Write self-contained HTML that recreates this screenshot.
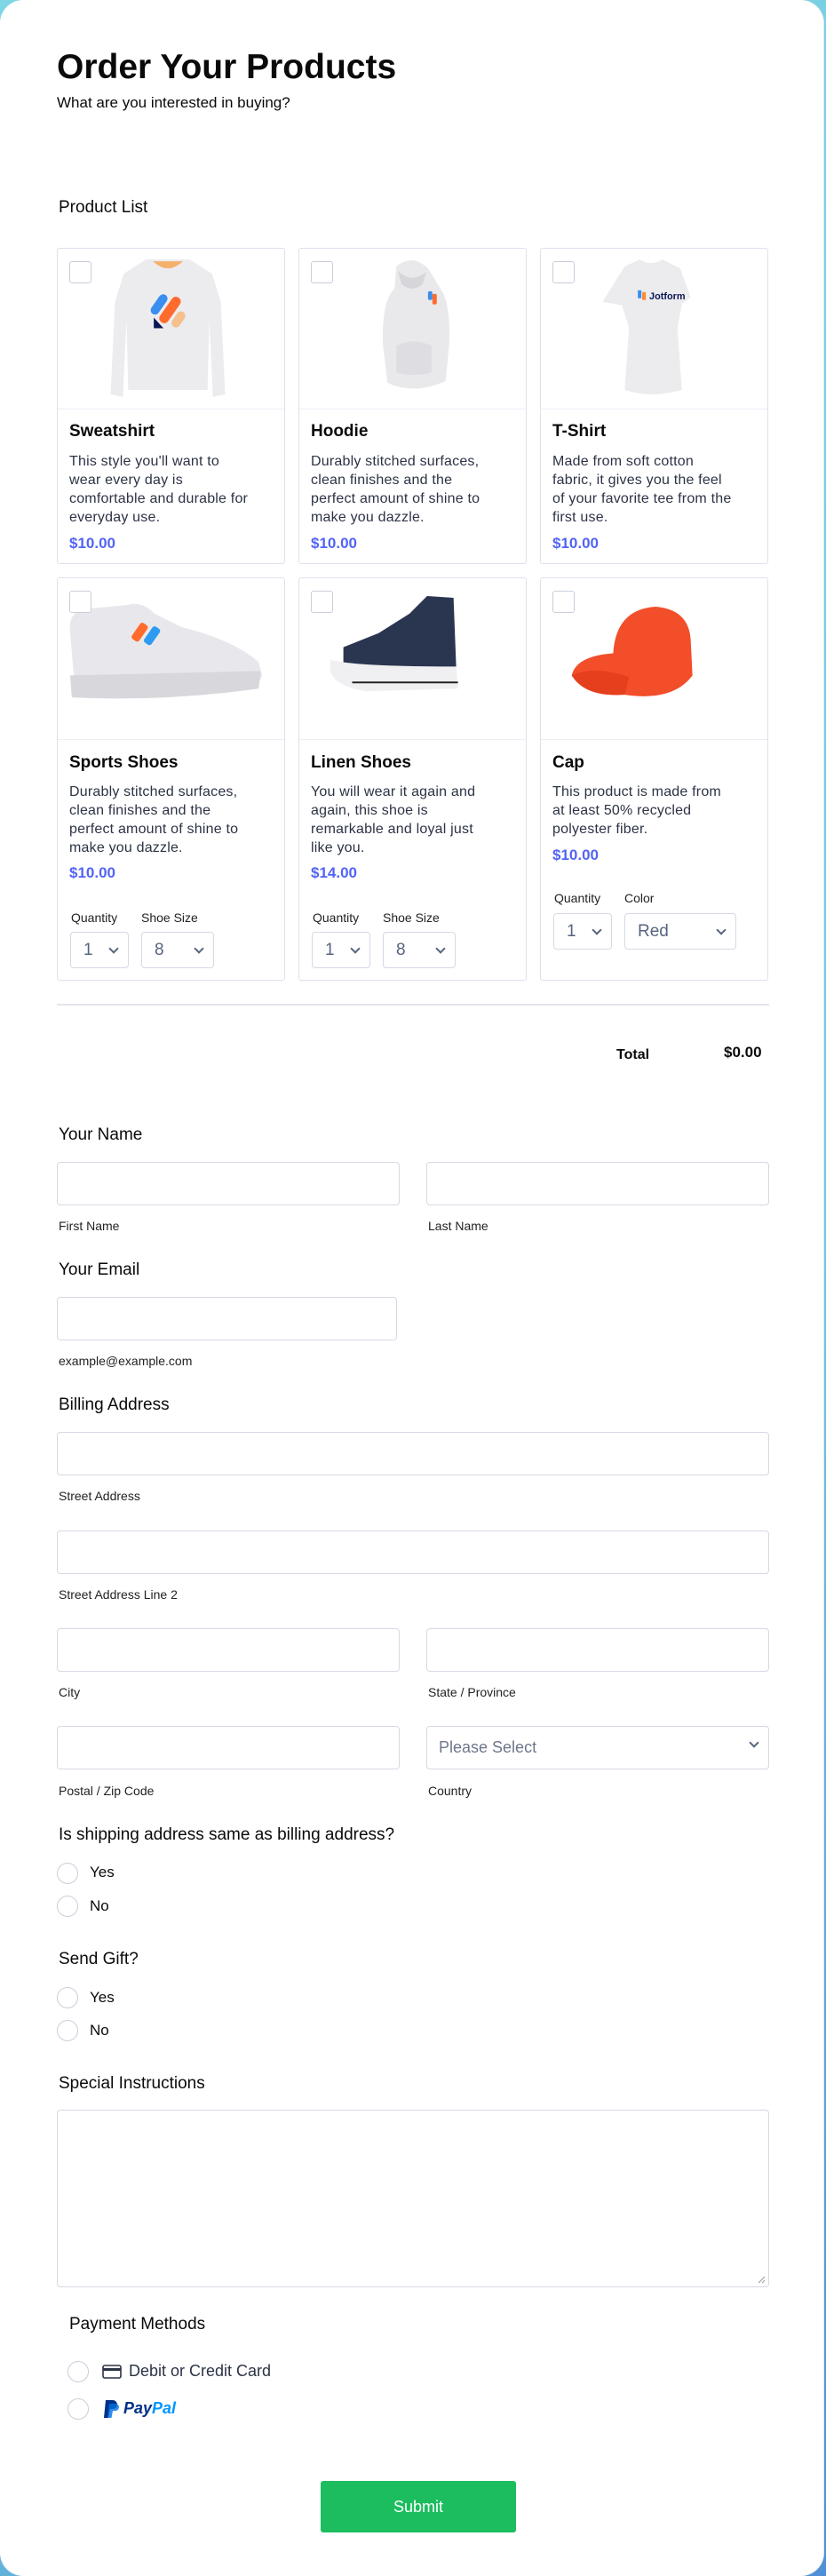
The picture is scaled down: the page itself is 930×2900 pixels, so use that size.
<!DOCTYPE html>
<html><head><meta charset="utf-8"><style>
*{box-sizing:border-box;margin:0;padding:0}
html,body{width:930px;height:2900px;overflow:hidden}
body{background:linear-gradient(135deg,#7fd6e4,#6fc9e0 60%,#4f8fd6);font-family:"Liberation Sans",sans-serif;color:#0a0a0a;position:relative}
.page{position:absolute;left:0;top:0;width:928px;height:2900px;background:#fff;border-radius:26px;border-right:1px solid #e4e8f0}
.a{position:absolute}
.lbl{font-size:19px;color:#0a1551}
.sub{font-size:14px;color:#222}
.card{position:absolute;border:1.5px solid #dde1ec;border-radius:3px;background:#fff;width:257px}
.card .img{position:absolute;left:0;top:0;width:100%;border-bottom:1px solid #eceef4}
.cb{position:absolute;left:13px;top:14px;width:25px;height:25px;border:1.5px solid #c9cedb;border-radius:3px;background:#fff}
.ct{position:absolute;left:13px;font-size:19px;font-weight:bold}
.cd{position:absolute;left:13px;width:240px;font-size:16px;line-height:21px;color:#2c3345;white-space:nowrap;letter-spacing:.2px}
.cp{position:absolute;left:13px;font-size:17px;font-weight:bold;color:#5264f5}
.sl{position:absolute;font-size:14px;color:#222}
.sel{position:absolute;height:41px;border:1.5px solid #d5d9e4;border-radius:4px;font-size:19px;color:#57647e;padding:9px 0 0 14px}
.sel:after{content:"";position:absolute;right:12px;top:14px;width:6px;height:6px;border-right:2px solid #57647e;border-bottom:2px solid #57647e;transform:rotate(45deg)}
.in{position:absolute;height:49px;border:1.5px solid #d5d9e4;border-radius:4px;background:#fff}
.rd{position:absolute;width:24px;height:24px;border:1.5px solid #c9cedb;border-radius:50%}
.rt{position:absolute;font-size:17px;color:#0a0a0a}
</style></head><body>
<div class="page">
<div class="a" style="left:64px;top:54px;font-size:39px;font-weight:bold">Order Your Products</div>
<div class="a" style="left:64px;top:106px;font-size:17px">What are you interested in buying?</div>
<div class="a lbl" style="left:66px;top:223px;color:#0a0a0a">Product List</div>

<!-- Row 1 -->
<div class="card" style="left:64px;top:279px;height:356px">
<svg class="img" height="181" viewBox="0 0 257 181"><path d="M100 12 L150 12 L175 28 L185 60 L190 165 L176 168 L172 80 L170 160 L80 160 L78 80 L74 168 L60 165 L65 60 L75 28 Z" fill="#ececef"/><path d="M108 14 Q125 30 142 14" fill="#f5b06c"/><rect x="110" y="50" width="10" height="26" rx="5" fill="#3a8ef0" transform="rotate(35 115 63)"/><rect x="122" y="52" width="11" height="34" rx="5" fill="#ff6b2c" transform="rotate(35 127 69)"/><rect x="132" y="70" width="10" height="20" rx="5" fill="#f5c08c" transform="rotate(35 137 80)"/><path d="M109 78 L109 90 L120 90 Z" fill="#0a1551"/></svg>
<div class="cb"></div>
<div class="ct" style="top:195px">Sweatshirt</div>
<div class="cd" style="top:229px">This style you'll want to<br>wear every day is<br>comfortable and durable for<br>everyday use.</div>
<div class="cp" style="top:322px">$10.00</div>
</div>
<div class="card" style="left:336px;top:279px;height:356px">
<svg class="img" height="181" viewBox="0 0 257 181"><path d="M110 20 Q128 5 146 22 L160 45 Q172 60 170 110 L166 150 Q130 166 100 152 L95 110 Q93 60 108 45 Z" fill="#e9e9ec"/><path d="M112 25 Q128 40 144 26 L140 40 Q128 50 116 40Z" fill="#d5d5da"/><path d="M110 110 Q130 100 150 110 L150 140 Q130 146 110 140Z" fill="#dedee2"/><rect x="146" y="48" width="5" height="10" rx="2" fill="#3a8ef0"/><rect x="151" y="51" width="5" height="12" rx="2" fill="#ff6b2c"/></svg>
<div class="cb"></div>
<div class="ct" style="top:195px">Hoodie</div>
<div class="cd" style="top:229px">Durably stitched surfaces,<br>clean finishes and the<br>perfect amount of shine to<br>make you dazzle.</div>
<div class="cp" style="top:322px">$10.00</div>
</div>
<div class="card" style="left:608px;top:279px;height:356px">
<svg class="img" height="181" viewBox="0 0 257 181"><path d="M95 20 L112 12 Q125 20 138 12 L158 22 L170 55 L160 62 L155 90 L160 160 Q125 170 95 160 L100 90 L92 64 L70 60 Z" fill="#ececef"/><rect x="110" y="47" width="4" height="9" fill="#3a8ef0"/><rect x="115" y="49" width="4" height="9" fill="#ff8a2c"/><text x="123" y="57" font-family="Liberation Sans" font-weight="bold" font-size="11" fill="#0a1551">Jotform</text></svg>
<div class="cb"></div>
<div class="ct" style="top:195px">T-Shirt</div>
<div class="cd" style="top:229px">Made from soft cotton<br>fabric, it gives you the feel<br>of your favorite tee from the<br>first use.</div>
<div class="cp" style="top:322px">$10.00</div>
</div>

<!-- Row 2 -->
<div class="card" style="left:64px;top:650px;height:454px">
<svg class="img" height="182" viewBox="0 0 257 182"><path d="M14 60 Q12 40 28 35 L80 30 Q95 25 110 40 L140 55 Q200 70 228 95 L232 110 L228 120 L20 132 Z" fill="#e8e8ec"/><path d="M14 110 L230 105 L228 125 Q120 140 16 135 Z" fill="#d8d8dc"/><rect x="88" y="50" width="10" height="22" rx="3" fill="#ff6b2c" transform="rotate(35 93 61)"/><rect x="102" y="54" width="10" height="22" rx="3" fill="#2e9bf0" transform="rotate(35 107 65)"/></svg>
<div class="cb"></div>
<div class="ct" style="top:197px">Sports Shoes</div>
<div class="cd" style="top:230px">Durably stitched surfaces,<br>clean finishes and the<br>perfect amount of shine to<br>make you dazzle.</div>
<div class="cp" style="top:322px">$10.00</div>
<div class="sl" style="left:15px;top:374px">Quantity</div><div class="sl" style="left:94px;top:374px">Shoe Size</div>
<div class="sel" style="left:14px;top:398px;width:66px">1</div>
<div class="sel" style="left:94px;top:398px;width:82px">8</div>
</div>
<div class="card" style="left:336px;top:650px;height:454px">
<svg class="img" height="182" viewBox="0 0 257 182"><path d="M50 78 L90 62 L125 40 L145 20 L175 22 L178 100 L160 108 L50 102 Z" fill="#2a3550"/><path d="M35 92 Q60 100 178 100 L180 125 L75 128 Q40 122 35 105 Z" fill="#f0f0f2"/><path d="M60 118 L180 118" stroke="#222" stroke-width="2"/></svg>
<div class="cb"></div>
<div class="ct" style="top:197px">Linen Shoes</div>
<div class="cd" style="top:230px">You will wear it again and<br>again, this shoe is<br>remarkable and loyal just<br>like you.</div>
<div class="cp" style="top:322px">$14.00</div>
<div class="sl" style="left:15px;top:374px">Quantity</div><div class="sl" style="left:94px;top:374px">Shoe Size</div>
<div class="sel" style="left:14px;top:398px;width:66px">1</div>
<div class="sel" style="left:94px;top:398px;width:82px">8</div>
</div>
<div class="card" style="left:608px;top:650px;height:454px">
<svg class="img" height="182" viewBox="0 0 257 182"><path d="M82 85 Q85 35 130 32 Q168 35 170 70 L172 110 Q150 140 95 132 L75 118 Q45 125 35 110 Q40 88 82 85 Z" fill="#f24e2a"/><path d="M35 110 Q60 98 100 112 L95 132 Q50 135 35 110Z" fill="#e4401e"/></svg>
<div class="cb"></div>
<div class="ct" style="top:197px">Cap</div>
<div class="cd" style="top:230px">This product is made from<br>at least 50% recycled<br>polyester fiber.</div>
<div class="cp" style="top:302px">$10.00</div>
<div class="sl" style="left:15px;top:352px">Quantity</div><div class="sl" style="left:94px;top:352px">Color</div>
<div class="sel" style="left:14px;top:377px;width:66px">1</div>
<div class="sel" style="left:94px;top:377px;width:126px">Red</div>
</div>

<div class="a" style="left:64px;top:1130px;width:802px;height:2px;background:#e2e5ec"></div>
<div class="a" style="left:694px;top:1179px;font-size:16px;font-weight:bold">Total</div>
<div class="a" style="left:815px;top:1175px;font-size:17px;font-weight:bold">$0.00</div>

<div class="a lbl" style="left:66px;top:1267px;color:#0a0a0a">Your Name</div>
<div class="in" style="left:64px;top:1308px;width:386px"></div>
<div class="in" style="left:480px;top:1308px;width:386px"></div>
<div class="a sub" style="left:66px;top:1372px">First Name</div>
<div class="a sub" style="left:482px;top:1372px">Last Name</div>

<div class="a lbl" style="left:66px;top:1419px;color:#0a0a0a">Your Email</div>
<div class="in" style="left:64px;top:1460px;width:383px"></div>
<div class="a sub" style="left:66px;top:1524px">example@example.com</div>

<div class="a lbl" style="left:66px;top:1571px;color:#0a0a0a">Billing Address</div>
<div class="in" style="left:64px;top:1612px;width:802px"></div>
<div class="a sub" style="left:66px;top:1676px">Street Address</div>
<div class="in" style="left:64px;top:1723px;width:802px"></div>
<div class="a sub" style="left:66px;top:1787px">Street Address Line 2</div>
<div class="in" style="left:64px;top:1833px;width:386px"></div>
<div class="in" style="left:480px;top:1833px;width:386px"></div>
<div class="a sub" style="left:66px;top:1897px">City</div>
<div class="a sub" style="left:482px;top:1897px">State / Province</div>
<div class="in" style="left:64px;top:1943px;width:386px"></div>
<div class="sel" style="left:480px;top:1943px;width:386px;height:49px;padding:13px 0 0 13px;font-size:18px;color:#6f768a">Please Select</div>
<div class="a sub" style="left:66px;top:2008px">Postal / Zip Code</div>
<div class="a sub" style="left:482px;top:2008px">Country</div>

<div class="a lbl" style="left:66px;top:2055px;color:#0a0a0a">Is shipping address same as billing address?</div>
<div class="rd" style="left:64px;top:2097px"></div><div class="rt" style="left:101px;top:2098px">Yes</div>
<div class="rd" style="left:64px;top:2134px"></div><div class="rt" style="left:101px;top:2136px">No</div>

<div class="a lbl" style="left:66px;top:2195px;color:#0a0a0a">Send Gift?</div>
<div class="rd" style="left:64px;top:2237px"></div><div class="rt" style="left:101px;top:2239px">Yes</div>
<div class="rd" style="left:64px;top:2274px"></div><div class="rt" style="left:101px;top:2276px">No</div>

<div class="a lbl" style="left:66px;top:2335px;color:#0a0a0a">Special Instructions</div>
<div class="in" style="left:64px;top:2375px;width:802px;height:200px"><svg style="position:absolute;right:3px;bottom:3px" width="9" height="9"><path d="M1 8L8 1M5 8L8 5" stroke="#999" stroke-width="1"/></svg></div>

<div class="a lbl" style="left:78px;top:2606px;color:#0a0a0a">Payment Methods</div>
<div class="rd" style="left:76px;top:2658px"></div>
<svg class="a" style="left:115px;top:2662px" width="22" height="16"><rect x="1" y="1" width="20" height="14" rx="2" fill="none" stroke="#2c3345" stroke-width="1.6"/><rect x="1" y="4" width="20" height="3" fill="#2c3345"/></svg>
<div class="a" style="left:145px;top:2659px;font-size:18px;color:#2c3345">Debit or Credit Card</div>
<div class="rd" style="left:76px;top:2700px"></div>
<svg class="a" style="left:115px;top:2700px" width="20" height="24"><path d="M4 2h8a5 5 0 0 1 0 10H9l-2 10H2Z" fill="#003087"/><path d="M8 6h7a4 4 0 0 1 0 8h-3l-1.5 8H6Z" fill="#0070e0" opacity=".8"/></svg>
<div class="a" style="left:139px;top:2701px;font-size:18px;font-weight:bold;font-style:italic"><span style="color:#003087">Pay</span><span style="color:#0095ff">Pal</span></div>

<div class="a" style="left:361px;top:2793px;width:220px;height:58px;background:#1bbd5e;border-radius:3px;color:#fff;font-size:18px;text-align:center;line-height:58px">Submit</div>
</div>
</body></html>
